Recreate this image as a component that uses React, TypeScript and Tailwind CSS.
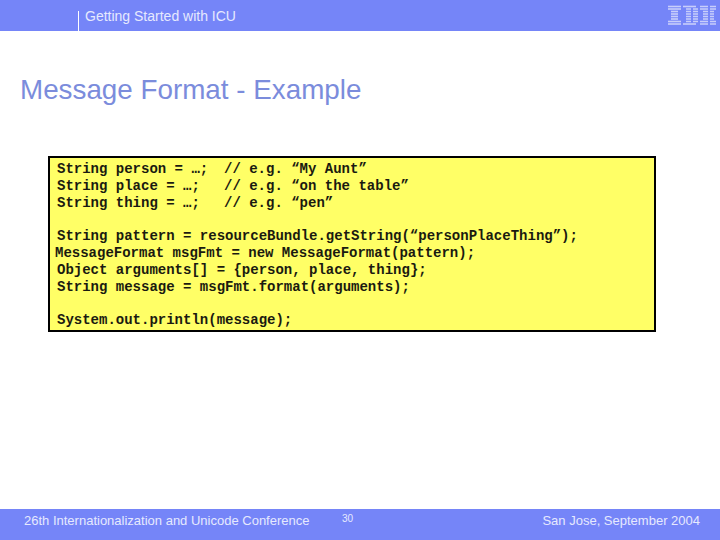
const rows = [
  { code: 'String person = …;', note: '// e.g. “My Aunt”' },
  { code: 'String place = …;', note: '// e.g. “on the table”' },
  { code: 'String thing = …;', note: '// e.g. “pen”' },
];

function IbmLogo() {
  // 8 bar logo, each bar is cut by the gaps that make the letters
  const bars = [6.5, 9, 11.5, 14, 16.5, 19, 21.5, 24];
  return (
    <svg width="52" height="22" viewBox="666 4 52 22" className="block">
      <g stroke="#c8cefa" strokeWidth="1.6">
        {bars.map((y, i) => {
          const outer = i === 0 || i === 7;
          const inner = i === 1 || i === 6;
          return (
            <g key={y}>
              {/* I */}
              {outer || inner ? <path d={`M668 ${y}H681`} /> : <path d={`M671 ${y}H678`} />}
              {/* B */}
              {outer ? <path d={`M683 ${y}H696`} /> : <path d={`M686 ${y}H691M693 ${y}H698`} />}
              {/* M */}
              {outer || inner ? <path d={`M700 ${y}H708M710 ${y}H716`} /> : <path d={`M703 ${y}H708M710 ${y}H714`} />}
            </g>
          );
        })}
      </g>
    </svg>
  );
}

export default function App() {
  return (
    <div className="w-[720px] h-[540px] bg-white flex flex-col overflow-hidden font-['Liberation_Sans',sans-serif]">
      {/* Header */}
      <div className="h-[31px] bg-[#7585f8] flex justify-between shrink-0">
        <div className="flex pl-[78px] pt-[11px]">
          <div className="w-px bg-white h-[20px]" />
          <div className="text-[14px] leading-[10px] text-[#e6e9fe] pl-[6px]">Getting Started with ICU</div>
        </div>
        <div className="pt-[4px] pr-[2px]">
          <IbmLogo />
        </div>
      </div>

      <h1 className="text-[27.8px] leading-[32px] text-[#7b8cdc] pl-[20px] pt-[43px] whitespace-nowrap">
        Message Format - Example
      </h1>

      {/* Code box */}
      <div className="ml-[48px] mt-[50px] w-[608px] h-[176px] border-2 border-black bg-[#ffff66] pl-[7px] pt-[3px] font-['Liberation_Mono',monospace] font-bold text-[14px] leading-[16.8px] text-[#1a1a10] whitespace-pre">
        {rows.map((r) => (
          <div key={r.code} className="flex">
            <div className="w-[167px]">{r.code}</div>
            <div>{r.note}</div>
          </div>
        ))}
        <div>{' '}</div>
        <div>String pattern = resourceBundle.getString(“personPlaceThing”);</div>
        <div className="-ml-[2px]">MessageFormat msgFmt = new MessageFormat(pattern);</div>
        <div>Object arguments[] = {'{'}person, place, thing{'}'};</div>
        <div>String message = msgFmt.format(arguments);</div>
        <div>{' '}</div>
        <div>System.out.println(message);</div>
      </div>

      {/* Footer */}
      <div className="mt-auto h-[31px] bg-[#7585f8] flex items-start text-[#e6e9fe] shrink-0 whitespace-nowrap">
        <div className="w-[342px] pl-[24px] pt-[4px] text-[13px] leading-[16px]">
          26th Internationalization and Unicode Conference
        </div>
        <div className="pt-[3px] text-[10px] leading-[14px]">30</div>
        <div className="ml-auto pr-[20px] pt-[4px] text-[13px] leading-[16px]">San Jose, September 2004</div>
      </div>
    </div>
  );
}
